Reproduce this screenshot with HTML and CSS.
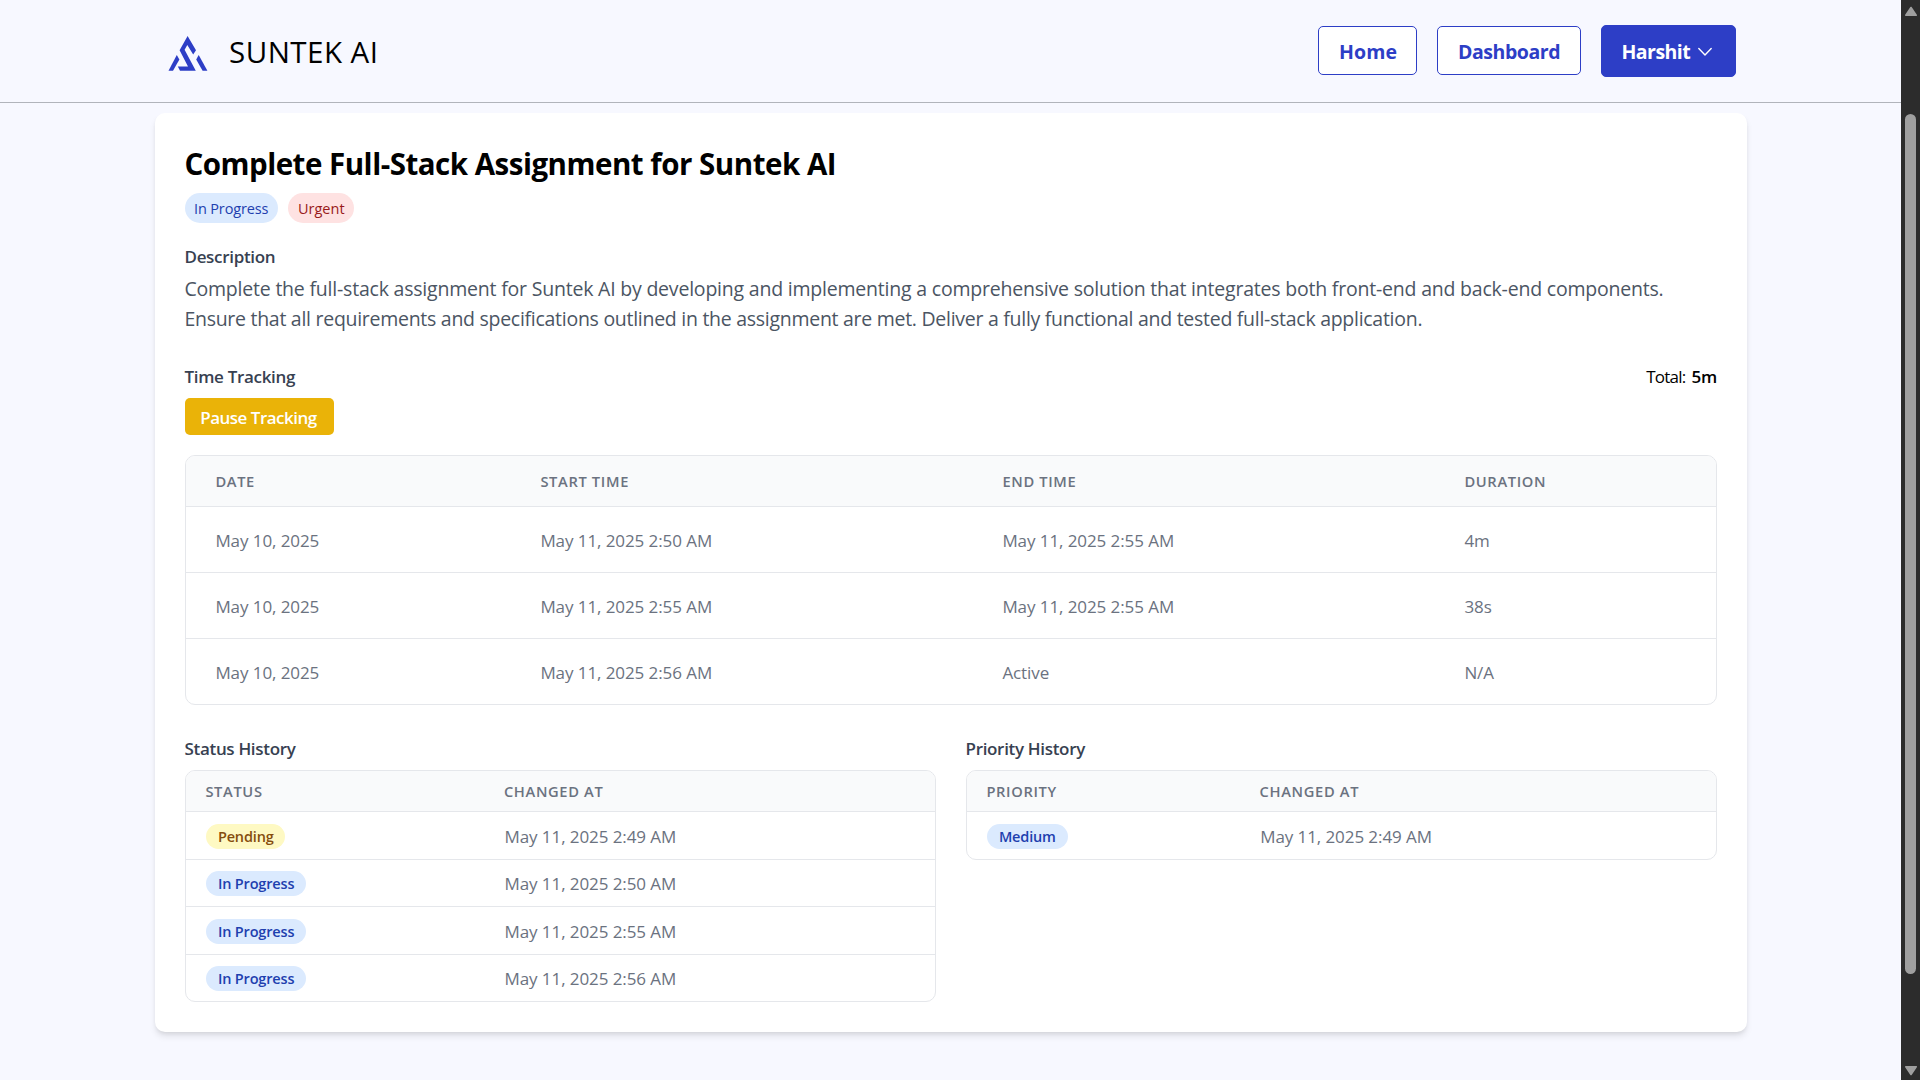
FILE: index.html
```html
<!DOCTYPE html>
<html lang="en">
<head>
<meta charset="utf-8">
<title>Suntek AI</title>
<link rel="stylesheet" href="styles.css">
</head>
<body>
<div class="page">
  <header class="header">
    <div class="brand">
      <svg class="logo" viewBox="0 0 40 36" width="40" height="36">
        <path d="M19.6 0 L28 14.2 L25.2 18.6 L19.3 9 L16.6 13.8 L27.8 34.8 H12 L9.8 30.6 H20 L11.6 14.2 Z"/>
        <path d="M8.8 19 L11.4 23.4 L5 34.8 H.5 Z"/>
        <path d="M30.7 19 L39.4 34.8 H34.6 L28.2 23.4 Z"/>
      </svg>
      <span class="brand-name">SUNTEK AI</span>
    </div>
    <nav class="nav">
      <a class="btn btn-home">Home</a>
      <a class="btn btn-dashboard">Dashboard</a>
      <a class="btn btn-user">Harshit
        <svg class="chevron" viewBox="0 0 16 10" width="16" height="10"><path d="M1.8 1.5 L8 8 L14.2 1.5"/></svg>
      </a>
    </nav>
  </header>

  <main class="card">
    <h1 class="title">Complete Full-Stack Assignment for Suntek AI</h1>
    <div class="tags">
      <span class="tag blue tag-status">In Progress</span>
      <span class="tag red tag-urgent">Urgent</span>
    </div>

    <h2 class="heading">Description</h2>
    <p class="description"><span class="line-one">Complete the full-stack assignment for Suntek AI by developing and implementing a comprehensive solution that integrates both front-end and back-end components.</span><br><span class="line-two">Ensure that all requirements and specifications outlined in the assignment are met. Deliver a fully functional and tested full-stack application.</span></p>

    <div class="tracking-head">
      <h2 class="heading">Time Tracking</h2>
      <div class="total"><span class="total-label">Total:</span><b>5m</b></div>
    </div>
    <button class="pause">Pause Tracking</button>

    <div class="table time-table">
      <div class="row head"><span>DATE</span><span>START TIME</span><span>END TIME</span><span>DURATION</span></div>
      <div class="row"><span>May 10, 2025</span><span>May 11, 2025 2:50 AM</span><span>May 11, 2025 2:55 AM</span><span>4m</span></div>
      <div class="row"><span>May 10, 2025</span><span>May 11, 2025 2:55 AM</span><span>May 11, 2025 2:55 AM</span><span>38s</span></div>
      <div class="row"><span>May 10, 2025</span><span>May 11, 2025 2:56 AM</span><span>Active</span><span>N/A</span></div>
    </div>

    <div class="histories">
      <section>
        <h2 class="heading">Status History</h2>
        <div class="table history status-history">
          <div class="row head"><span>STATUS</span><span>CHANGED AT</span></div>
          <div class="row"><i class="pill yellow">Pending</i><span>May 11, 2025 2:49 AM</span></div>
          <div class="row"><i class="pill blue">In Progress</i><span>May 11, 2025 2:50 AM</span></div>
          <div class="row"><i class="pill blue">In Progress</i><span>May 11, 2025 2:55 AM</span></div>
          <div class="row"><i class="pill blue">In Progress</i><span>May 11, 2025 2:56 AM</span></div>
        </div>
      </section>
      <section>
        <h2 class="heading">Priority History</h2>
        <div class="table history priority-history">
          <div class="row head"><span>PRIORITY</span><span>CHANGED AT</span></div>
          <div class="row"><i class="pill blue">Medium</i><span>May 11, 2025 2:49 AM</span></div>
        </div>
      </section>
    </div>
  </main>
</div>
<div class="scrollbar">
  <svg viewBox="0 0 14 11" width="14" height="11"><path d="M7 1.5 L12.2 9.3 H1.8 Z"/></svg>
  <div class="thumb"></div>
  <svg viewBox="0 0 14 11" width="14" height="11"><path d="M7 9.5 L12.2 1.7 H1.8 Z"/></svg>
</div>
</body>
</html>
```
FILE: styles.css
```css
* { box-sizing: border-box; margin: 0; padding: 0; }

body {
  display: flex;
  width: 1920px;
  height: 1080px;
  overflow: hidden;
  background: #f7f8ff;
  color: #000;
  font-family: "Open Sans", "Noto Sans", sans-serif;
  font-size: 17px;
  line-height: 25px;
}

.page { width: 1901px; }

/* Header */
.header {
  display: flex;
  justify-content: space-between;
  align-items: center;
  height: 103px;
  padding: 0 165px 0 168px;
  border-bottom: 1px solid #b1b4bb;
}
.brand { display: flex; align-items: center; gap: 21px; }
.logo { fill: #2d3ec6; margin-top: 5px; }
.brand-name { font-size: 29.5px; line-height: 40px; letter-spacing: .48px; padding-top: 1px; }

.nav { display: flex; align-items: flex-start; height: 52px; gap: 20px; }
.btn {
  display: flex;
  align-items: center;
  height: 49px;
  margin-top: 1px;
  padding: 1px 0 0 20px;
  border: 1px solid #2d3ec6;
  border-radius: 5px;
  background: #fff;
  color: #2d3ec6;
  font-size: 19.5px;
  font-weight: 700;
}
.btn-home { width: 99px; letter-spacing: .15px; }
.btn-dashboard { width: 144px; letter-spacing: -.44px; }
.btn-user { width: 135px; height: 52px; margin-top: 0; padding: 1px 0 0 19.5px; background: #2d3ec6; color: #fff; letter-spacing: -.55px; gap: 7px; }
.chevron { fill: none; stroke: #fff; stroke-width: 1.4; stroke-linecap: round; stroke-linejoin: round; }

/* Task card */
.card {
  width: 1592px;
  height: 919px;
  margin: 10px auto 0 155px;
  padding: 30px;
  border-radius: 10px;
  background: #fff;
  box-shadow: 0 5px 7.5px -1.25px rgba(0, 0, 0, .1), 0 2.5px 5px -2.5px rgba(0, 0, 0, .1);
}
.title { height: 40px; font-size: 29.5px; line-height: 42px; font-weight: 700; letter-spacing: -.49px; margin-left: -.6px; }

.tags { display: flex; gap: 10px; margin: 10px 0 20px; }
.tag { height: 30px; padding-left: 9px; border-radius: 15px; font-size: 14.5px; line-height: 31px; }
.tag-status { width: 93px; letter-spacing: -.14px; }
.tag-urgent { width: 66px; padding-left: 10px; }
.blue { background: #dbeafe; color: #1e40af; }
.red { background: #fee2e2; color: #991b1b; }
.yellow { background: #fef9c3; color: #854d0e; }

.heading { height: 25px; font-size: 17px; line-height: 27px; font-weight: 600; letter-spacing: -.32px; color: #374151; margin-left: -.5px; }
.description { height: 60px; margin: 5px 0 30px -.6px; font-size: 19.5px; line-height: 30px; padding-top: 1px; color: #4b5563; white-space: nowrap; }
.line-one { letter-spacing: -.207px; }
.line-two { letter-spacing: -.277px; }

.tracking-head { display: flex; justify-content: space-between; }
.total { display: flex; height: 25px; gap: 6px; line-height: 27px; }
.total-label { letter-spacing: -.77px; }
.total b { font-weight: 600; letter-spacing: -.2px; }
.pause {
  display: block;
  width: 149px;
  height: 37px;
  margin: 10px 0 20px;
  padding: 1px 2px 0 0;
  border: 0;
  border-radius: 5px;
  background: #eab308;
  color: #fff;
  font: 600 17px/38px "Open Sans", sans-serif;
  letter-spacing: -.5px;
}

/* Tables */
.table { overflow: hidden; border: 1px solid #e5e7eb; border-radius: 10px; color: #6b7280; }
.row { display: grid; align-items: center; border-top: 1px solid #e5e7eb; letter-spacing: -.08px; white-space: nowrap; }
.row span { padding-top: 2px; }
.row.head { border-top: 0; background: #f9fafb; font-size: 14.7px; font-weight: 600; letter-spacing: .65px; }
.row.head span { padding-top: 0; }

.time-table { height: 250px; margin-bottom: 30px; }
.time-table .row { grid-template-columns: 325px 462px 462px 1fr; height: 66px; padding-left: 29.4px; }
.time-table .head { height: 50px; }

.histories { display: grid; grid-template-columns: 751px 751px; gap: 30px; }
.history { margin-top: 10px; }
.history .row { height: 47.5px; padding-left: 20px; }
.history .head { height: 40px; padding-left: 19.4px; }
.status-history .row { grid-template-columns: 298.5px 1fr; }
.priority-history .row { grid-template-columns: 273.2px 1fr; }

.pill {
  width: fit-content;
  height: 25px;
  margin-top: 2px;
  padding: 0 11.9px;
  border-radius: 13px;
  font-size: 14.5px;
  font-style: normal;
  font-weight: 600;
  letter-spacing: -.16px;
}

/* Window scrollbar */
.scrollbar {
  display: flex;
  flex-direction: column;
  align-items: center;
  justify-content: space-between;
  width: 19px;
  padding: 6px 0 4px;
  background: #2c2c2c;
}
.scrollbar svg { fill: #9f9f9f; stroke: #9f9f9f; stroke-width: 1.6; stroke-linejoin: round; }
.thumb { width: 11px; height: 860px; margin-top: 6px; border-radius: 6px; background: #9f9f9f; }
```
